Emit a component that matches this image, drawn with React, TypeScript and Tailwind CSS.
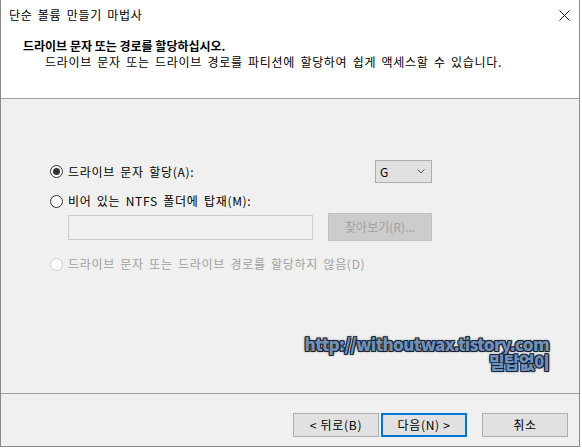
import { ReactNode } from 'react';

function Radio({ checked, disabled, children }: { checked?: boolean; disabled?: boolean; children: ReactNode }) {
  return (
    <div className="flex items-center h-4">
      <span
        className={`w-[13px] h-[13px] rounded-full border flex items-center justify-center bg-white ${
          disabled ? 'border-[#cccccc] bg-[#f0f0f0]' : 'border-[#333333]'
        }`}
      >
        {checked && <span className="w-[7px] h-[7px] rounded-full bg-[#333333]" />}
      </span>
      <span className={`ml-[5px] ${disabled ? 'text-[#a0a0a0]' : 'text-black'}`}>{children}</span>
    </div>
  );
}

function WizardButton({ children, primary }: { children: ReactNode; primary?: boolean }) {
  return (
    <button
      className={`w-[86px] h-[24px] bg-[#e1e1e1] flex items-center justify-center text-black ${
        primary ? 'border-2 border-[#0078d7]' : 'border border-[#adadad]'
      }`}
    >
      {children}
    </button>
  );
}

export default function App() {
  return (
    <div className="w-[582px] h-[448px] bg-white font-['Noto_Sans_CJK_KR','Noto_Sans',sans-serif] text-[12px] leading-none tracking-[0.7px] [word-spacing:2px]">
      <div className="w-[580px] h-[447px] border-l border-r border-b border-[#8a8a8a] flex flex-col">
        {/* 머리글 */}
        <div className="h-[99px] bg-white border-b border-[#a0a0a0] flex flex-col">
          <div className="h-[30px] flex items-center justify-between pl-[8px] pr-[9px]">
            <span>단순 볼륨 만들기 마법사</span>
            <svg width="11" height="11" viewBox="0 0 11 11">
              <path d="M0.5 0.5L10.5 10.5M10.5 0.5L0.5 10.5" stroke="#222" strokeWidth="1" />
            </svg>
          </div>
          <div className="pl-[22px] pt-[10px] font-bold tracking-normal [word-spacing:0px]">
            드라이브 문자 또는 경로를 할당하십시오.
          </div>
          <div className="pl-[44px] pt-[4px]">
            드라이브 문자 또는 드라이브 경로를 파티션에 할당하여 쉽게 액세스할 수 있습니다.
          </div>
        </div>

        {/* 본문 */}
        <div className="flex-1 bg-[#f0f0f0] flex flex-col pt-[61px] pl-[49px] pr-[30px]">
          <div className="w-[382px] flex items-center justify-between">
            <Radio checked>드라이브 문자 할당(A):</Radio>
            <div className="w-[57px] h-[23px] bg-[#e1e1e1] border border-[#adadad] flex items-center justify-between pl-[4px] pr-[6px]">
              <span>G</span>
              <svg width="8" height="5" viewBox="0 0 8 5">
                <path d="M0.5 0.5L4 4L7.5 0.5" stroke="#555" strokeWidth="1" fill="none" />
              </svg>
            </div>
          </div>
          <div className="mt-[10px]">
            <Radio>비어 있는 NTFS 폴더에 탑재(M):</Radio>
          </div>
          <div className="mt-[4px] ml-[18px] flex items-center gap-[15px]">
            <div className="w-[245px] h-[25px] bg-[#f0f0f0] border border-[#cccccc]" />
            <div className="w-[104px] h-[28px] bg-[#cccccc] border border-[#bfbfbf] flex items-center justify-center text-[#a0a0a0] tracking-normal">
              찾아보기(R)...
            </div>
          </div>
          <div className="mt-[15px]">
            <Radio disabled>드라이브 문자 또는 드라이브 경로를 할당하지 않음(D)</Radio>
          </div>
          <div className="mt-[63px] self-end flex flex-col items-end font-black text-[17px] leading-[18px] text-[#7190bc] tracking-[-0.65px] [word-spacing:0px] [text-shadow:0_0_1px_#1a2636,1px_1px_0_#1a2636,-1px_-1px_0_#1a2636,1px_-1px_0_#1a2636,-1px_1px_0_#1a2636,0_0_3px_#1a2636]">
            <span>http://withoutwax.tistory.com</span>
            <span>밀탑없이</span>
          </div>
        </div>

        {/* 바닥글 */}
        <div className="h-[53px] bg-[#f0f0f0] border-t border-[#a0a0a0] flex items-start justify-end pt-[19px] pr-[11px]">
          <WizardButton>&lt; 뒤로(B)</WizardButton>
          <div className="ml-[2px]">
            <WizardButton primary>다음(N) &gt;</WizardButton>
          </div>
          <div className="ml-[15px]">
            <WizardButton>취소</WizardButton>
          </div>
        </div>
      </div>
    </div>
  );
}
